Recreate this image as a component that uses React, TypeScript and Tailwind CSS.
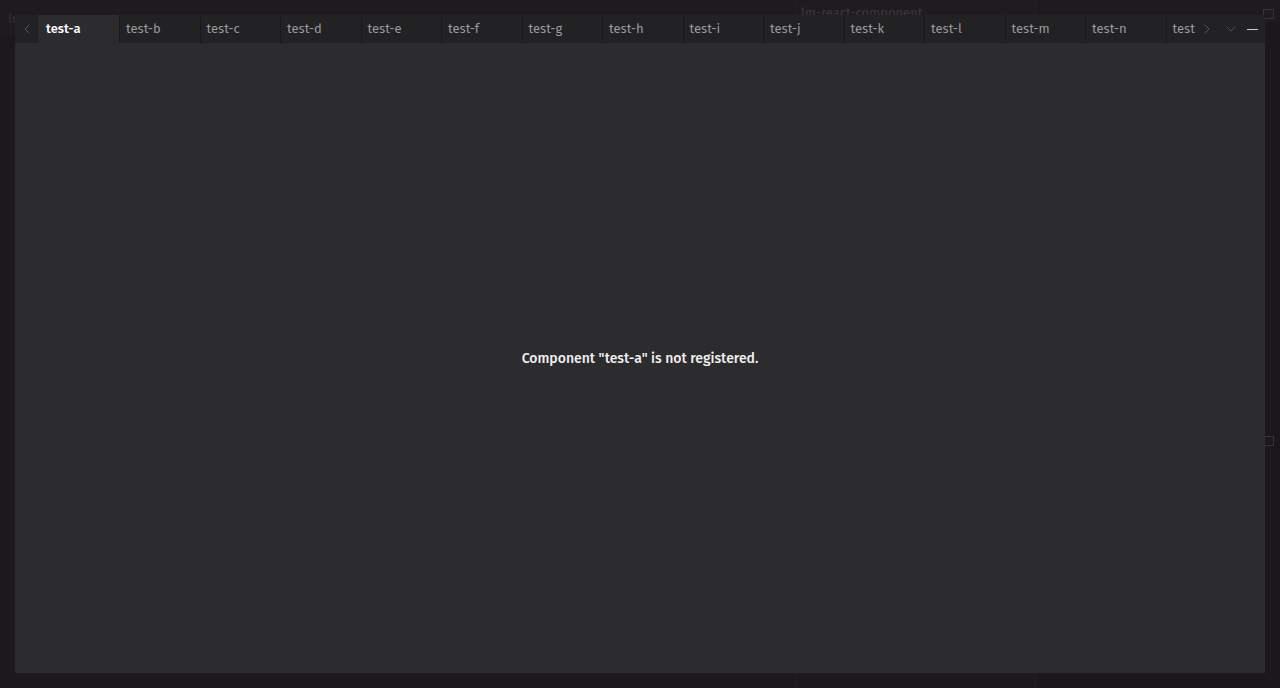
import { ChevronLeft, ChevronRight, ChevronDown } from 'lucide-react'

const tabs = 'abcdefghijklmnop'.split('').map((c) => `test-${c}`)

const font = { fontFamily: '"Fira Sans", "Noto Sans", "Open Sans", sans-serif' }

export default function App() {
  return (
    <div className="relative w-[1280px] h-[688px] overflow-hidden bg-[#1b181b]" style={font}>
      {/* underlay layout */}
      <div className="flex h-full">
        <div className="w-[795px] flex flex-col">
          <div className="h-[36px] bg-[#1e1b1e] px-2 pt-[9px] text-[13px] text-[#34313a]">lr</div>
          <div className="flex-1 bg-[#1c191c]" />
        </div>
        <div className="w-[240px] flex flex-col border-l border-[#221f22]">
          <div className="h-[22px] bg-[#1f1c1f] px-[5px] pt-[5px] text-[13px] leading-4 text-[#3a3740]">lm-react-component</div>
          <div className="flex-1 bg-[#1c191c]" />
        </div>
        <div className="flex-1 flex flex-col border-l border-[#221f22]">
          <div className="h-[22px] bg-[#1e1b1e]" />
          <div className="flex-1 bg-[#1b181b]" />
        </div>
      </div>
      <div className="absolute left-[1263px] top-[9px] w-[11px] h-[10px] border border-[#36333a]" />
      <div className="absolute left-[1264px] top-[436px] w-[10px] h-[10px] border border-[#36333a]" />

      {/* maximised stack */}
      <div className="absolute left-[15px] top-[15px] w-[1250px] h-[658px] flex flex-col bg-[#2c2b2e]">
        <div className="h-[28px] flex items-stretch bg-[#222124]">
          <div className="w-[23px] flex items-center justify-center text-[#6f6d73]">
            <ChevronLeft className="w-[16px] h-[16px]" strokeWidth={1} />
          </div>
          <div className="flex-1 flex overflow-hidden">
            {tabs.map((t, i) => (
              <div
                key={t}
                className={
                  i === 0
                    ? 'shrink-0 w-[81px] pl-[8px] flex items-center text-[13px] font-medium text-white bg-[#2c2b2e]'
                    : 'shrink-0 w-[80.5px] pl-[6px] flex items-center text-[13px] text-[#9c9a9f] border-l border-[#19171a]'
                }
              >
                {t}
              </div>
            ))}
          </div>
          <div className="w-[24px] flex items-center justify-center text-[#6f6d73]">
            <ChevronRight className="w-[16px] h-[16px]" strokeWidth={1} />
          </div>
          <div className="w-[24px] flex items-center justify-center text-[#6f6d73]">
            <ChevronDown className="w-[16px] h-[16px]" strokeWidth={1} />
          </div>
          <div className="w-[22px] flex items-center justify-start pl-[4px]">
            <div className="w-[11px] h-px bg-[#cfcdd2]" />
          </div>
        </div>
        <div className="flex-1 flex items-center justify-center">
          <span className="text-[14px] font-medium text-[#f0eff1]">Component "test-a" is not registered.</span>
        </div>
      </div>
    </div>
  )
}
